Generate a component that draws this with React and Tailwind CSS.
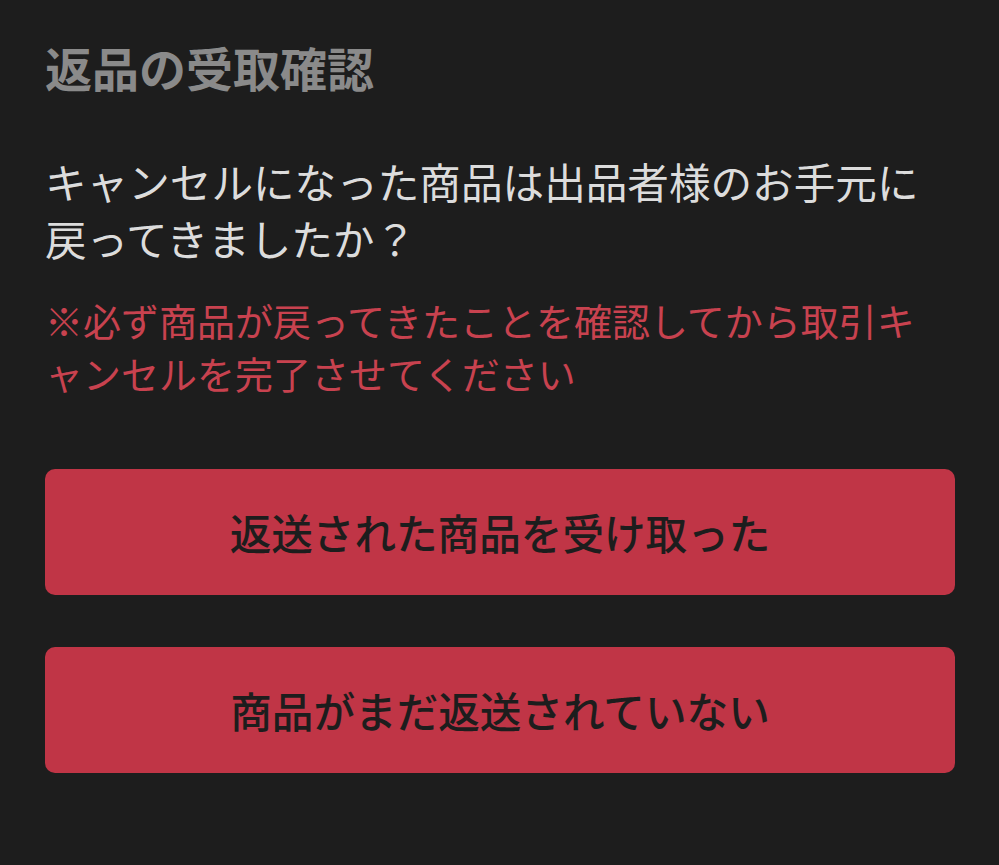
export default function App() {
  return (
    <div
      className="w-[999px] h-[865px] bg-[#1d1d1d] overflow-hidden"
      style={{ fontFamily: '"Noto Sans CJK JP", "Noto Sans", sans-serif' }}
    >
      <div className="pl-[45px] pr-[45px] pt-[37px] w-[1000px]">
        <h1 className="text-[47px] leading-[60px] font-bold text-[#8a8a8a]">返品の受取確認</h1>
        <p className="mt-[56px] w-[910px] text-[41.6px] leading-[57px] text-[#dcdcdc]">
          キャンセルになった商品は出品者様のお手元に
          <br />
          戻ってきましたか？
        </p>
        <p className="mt-[26px] w-[910px] text-[38px] leading-[53px] text-[#c8424f]">
          ※必ず商品が戻ってきたことを確認してから取引キ
          <br />
          ャンセルを完了させてください
        </p>
        <div className="mt-[70px] w-[910px] flex flex-col gap-[52px]">
          <button className="h-[126px] w-full rounded-[10px] bg-[#c03546] text-[41.6px] font-medium text-[#1d1d1d]">
            返送された商品を受け取った
          </button>
          <button className="h-[126px] w-full rounded-[10px] bg-[#c03546] text-[41.6px] font-medium text-[#1d1d1d]">
            商品がまだ返送されていない
          </button>
        </div>
      </div>
    </div>
  );
}
